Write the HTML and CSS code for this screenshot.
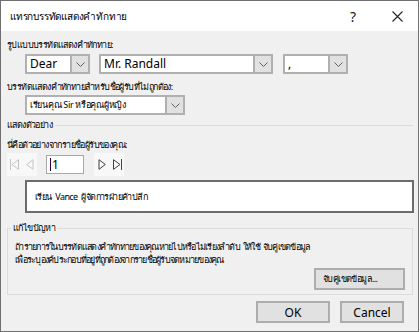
FILE: index.html
```html
<!DOCTYPE html>
<html lang="th">
<head>
  <meta charset="UTF-8">
  <title>แทรกบรรทัดแสดงคำทักทาย</title>
  <link rel="stylesheet" href="styles.css">
</head>
<body>
<div class="dialog">
  <div class="titlebar">
    <span class="title">แทรกบรรทัดแสดงคำทักทาย</span>
    <span class="help">?</span>
    <svg class="close" width="11" height="11" viewBox="0 0 11 11"><path d="M0.5 0.5 L10.5 10.5 M10.5 0.5 L0.5 10.5" stroke="#222" stroke-width="1.1"/></svg>
  </div>

  <div class="content">
    <div class="label first">รูปแบบบรรทัดแสดงคำทักทาย:</div>
    <div class="combo-row">
      <div class="combo w-dear"><span class="val">Dear</span><span class="arrow"><svg width="9" height="5" viewBox="0 0 9 5"><path d="M0.5 0.5 L4.5 4.5 L8.5 0.5" fill="none" stroke="#606060"/></svg></span></div>
      <div class="combo w-name"><span class="val">Mr. Randall</span><span class="arrow"><svg width="9" height="5" viewBox="0 0 9 5"><path d="M0.5 0.5 L4.5 4.5 L8.5 0.5" fill="none" stroke="#606060"/></svg></span></div>
      <div class="combo w-punct"><span class="val">,</span><span class="arrow"><svg width="9" height="5" viewBox="0 0 9 5"><path d="M0.5 0.5 L4.5 4.5 L8.5 0.5" fill="none" stroke="#606060"/></svg></span></div>
    </div>

    <div class="label second">บรรทัดแสดงคำทักทายสำหรับชื่อผู้รับที่ไม่ถูกต้อง:</div>
    <div class="combo-row single">
      <div class="combo w-invalid"><span class="val thai">เรียนคุณ Sir หรือคุณผู้หญิง</span><span class="arrow"><svg width="9" height="5" viewBox="0 0 9 5"><path d="M0.5 0.5 L4.5 4.5 L8.5 0.5" fill="none" stroke="#606060"/></svg></span></div>
    </div>

    <div class="section-head">
      <span>แสดงตัวอย่าง</span>
      <span class="rule"></span>
    </div>
    <div class="label third">นี่คือตัวอย่างจากรายชื่อผู้รับของคุณ:</div>
    <div class="nav-row">
      <div class="nav-pair">
        <span class="nav-btn"><svg width="10" height="11" viewBox="0 0 10 11"><path d="M0.5 0 V11 M8.5 0.7 L2 5.5 L8.5 10.3 Z" fill="none" stroke="#c4c4c4"/></svg></span>
        <span class="nav-btn"><svg width="8" height="11" viewBox="0 0 8 11"><path d="M7 0.7 L0.7 5.5 L7 10.3 Z" fill="none" stroke="#c4c4c4"/></svg></span>
      </div>
      <div class="record"><span class="caret"></span>1</div>
      <div class="nav-pair">
        <span class="nav-btn"><svg width="8" height="11" viewBox="0 0 8 11"><path d="M1 0.7 L7.3 5.5 L1 10.3 Z" fill="none" stroke="#404040"/></svg></span>
        <span class="nav-btn"><svg width="10" height="11" viewBox="0 0 10 11"><path d="M1.5 0.7 L8 5.5 L1.5 10.3 Z M9.5 0 V11" fill="none" stroke="#404040"/></svg></span>
      </div>
    </div>
    <div class="preview">เรียน Vance ผู้จัดการฝ่ายค้าปลีก</div>

    <fieldset class="group">
      <legend>แก้ไขปัญหา</legend>
      <p class="hint">ถ้ารายการในบรรทัดแสดงคำทักทายของคุณหายไปหรือไม่เรียงลำดับ ให้ใช้ จับคู่เขตข้อมูล<br>เพื่อระบุองค์ประกอบที่อยู่ที่ถูกต้องจากรายชื่อผู้รับจดหมายของคุณ</p>
      <div class="group-actions">
        <button class="btn match">จับคู่เขตข้อมูล...</button>
      </div>
    </fieldset>

    <div class="footer">
      <button class="btn ok">OK</button>
      <button class="btn cancel">Cancel</button>
    </div>
  </div>
</div>
</body>
</html>
```

FILE: styles.css
```css
body {
  margin: 0;
  background: #fff;
  font-family: 'Noto Sans', 'DejaVu Sans', sans-serif;
  font-size: 9px;
  letter-spacing: -0.6px;
  word-spacing: 1.5px;
  color: #000;
}
.dialog {
  width: 419px;
  height: 332px;
  box-sizing: border-box;
  border: 1px solid #707070;
  background: #f0f0f0;
}
.titlebar {
  height: 30px;
  background: #fff;
  display: flex;
  align-items: center;
  padding-left: 9px;
}
.title {
  flex: 1;
  font-size: 10px;
  letter-spacing: -0.2px;
}
.help {
  font-size: 14px;
  letter-spacing: 0;
  color: #222;
  margin-right: 36px;
}
.close {
  margin-right: 15px;
}
.content {
  padding: 0 4px 0 6px;
}
.label {
  height: 14px;
  line-height: 14px;
}
.label.first { margin-top: 7px; }
.label.second { margin-top: 6px; }
.label.third { margin-top: 6px; }
.combo-row {
  display: flex;
  gap: 9px;
  margin-top: 2px;
  margin-left: 18px;
}
.combo-row.single { margin-top: 1px; }
.combo {
  height: 20px;
  box-sizing: border-box;
  border: 2px solid #b0b0b0;
  background: #fff;
  display: flex;
}
.combo .val {
  flex: 1;
  padding-left: 3px;
  line-height: 16px;
  font-size: 12px;
  letter-spacing: 0;
  word-spacing: 0;
  white-space: nowrap;
  overflow: hidden;
}
.combo .val.thai {
  font-size: 9px;
  letter-spacing: -0.3px;
}
.combo .arrow {
  width: 16px;
  background: #e1e1e1;
  border-left: 2px solid #b0b0b0;
  display: flex;
  align-items: center;
  justify-content: center;
}
.w-dear { width: 65px; }
.w-name { width: 174px; margin-right: 1px; }
.w-punct { width: 65px; }
.w-invalid { width: 160px; }
.section-head {
  display: flex;
  align-items: center;
  height: 14px;
  margin-top: 3px;
}
.section-head .rule {
  flex: 1;
  border-top: 1px solid #dcdcdc;
  margin: 1px 1px 0 3px;
}
.nav-row {
  display: flex;
  align-items: center;
  gap: 9px;
  height: 23px;
  margin-top: 1px;
}
.nav-pair {
  display: flex;
  width: 30px;
  height: 23px;
  background: #f8f8f8;
}
.nav-pair + .record + .nav-pair { margin-left: 1px; }
.nav-btn {
  flex: 1;
  display: flex;
  align-items: center;
  justify-content: center;
}
.record {
  width: 38px;
  height: 19px;
  box-sizing: border-box;
  border: 1px solid #a8a8a8;
  background: #fff;
  font-size: 12px;
  letter-spacing: 0;
  line-height: 17px;
  padding-left: 3px;
  display: flex;
  align-items: center;
}
.caret {
  width: 1px;
  height: 13px;
  background: #300040;
  margin-right: 1px;
}
.preview {
  margin: 4px 0 0 18px;
  height: 33px;
  box-sizing: border-box;
  border: 2px solid #6c6c6c;
  background: #fff;
  padding-left: 8px;
  line-height: 29px;
  word-spacing: 2px;
}
.group {
  margin: 8px 1px 0 0;
  padding: 5px 7px 4px 7px;
  border: 1px solid #dcdcdc;
  min-inline-size: 0;
}
.group legend {
  margin-left: -4px;
  padding: 0 2px;
  line-height: 14px;
}
.hint {
  margin: 0;
  line-height: 13px;
  letter-spacing: -0.75px;
}
.group-actions {
  display: flex;
  justify-content: flex-end;
  margin-top: 2px;
}
.btn {
  height: 22px;
  box-sizing: border-box;
  border: 2px solid #adadad;
  background: #e1e1e1;
  font-family: inherit;
  font-size: 12px;
  letter-spacing: 0;
  color: #000;
  padding: 0;
}
.btn.match {
  width: 91px;
  font-size: 9px;
  letter-spacing: -0.6px;
  text-align: left;
  padding-left: 7px;
}
.footer {
  display: flex;
  justify-content: flex-end;
  gap: 10px;
  margin-top: 6px;
  padding-right: 10px;
}
.btn.ok { width: 74px; }
.btn.cancel { width: 64px; }
```
